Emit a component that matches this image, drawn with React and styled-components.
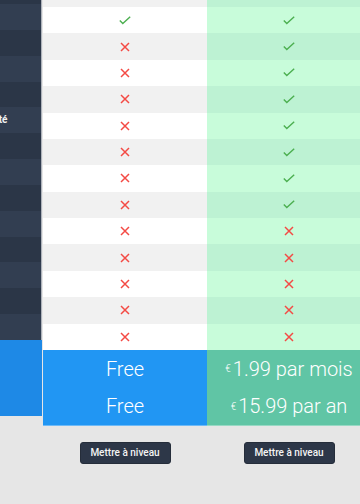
import React from "react";
import styled, { createGlobalStyle } from "styled-components";

const GlobalStyle = createGlobalStyle`
  html, body {
    margin: 0;
    padding: 0;
    background: #e6e6e6;
    overflow: hidden;
    font-family: Roboto, "Liberation Sans", sans-serif;
  }
`;

const Table = styled.div`
  display: flex;
  align-items: flex-start;
  width: 372px;
`;

const LabelColumn = styled.div`
  display: flex;
  flex-direction: column;
  width: 42px;
  flex-shrink: 0;
`;

const LabelRows = styled.div`
  display: flex;
  flex-direction: column;
  border-right: 1px solid #aeb3bb;
`;

const LabelCell = styled.div`
  height: ${p => p.$h}px;
  background: ${p => (p.$alt ? "#2b3647" : "#323e51")};
  color: #f2f2f2;
  font-size: 10px;
  font-weight: 700;
  line-height: ${p => p.$h}px;
  white-space: nowrap;
  overflow: hidden;
  text-indent: -56px;
`;

const LabelFoot = styled.div`
  height: 76px;
  background: #1e89e6;
`;

const PlanColumn = styled.div`
  display: flex;
  flex-direction: column;
  width: 164px;
  flex-shrink: 0;
  border-left: ${p => (p.$first ? "1px solid #e6e6e6" : "none")};
`;

const Cell = styled.div`
  height: ${p => p.$h}px;
  display: flex;
  align-items: center;
  justify-content: center;
  background: ${p => p.$bg};
`;

const PriceBlock = styled.div`
  display: flex;
  flex-direction: column;
  background: ${p => p.$bg};
  border-bottom: 1px solid rgba(255, 255, 255, 0.35);
`;

const PriceRow = styled.div`
  height: 37.5px;
  display: flex;
  align-items: center;
  justify-content: center;
  color: #ffffff;
  font-size: 20px;
  font-weight: 300;
`;

const Currency = styled.span`
  font-size: 10px;
  margin-right: 2px;
`;

const ButtonArea = styled.div`
  display: flex;
  justify-content: center;
  padding-top: 16px;
`;

const UpgradeButton = styled.button`
  width: 91px;
  height: 22px;
  padding: 0;
  border: 1px solid #252d3a;
  border-radius: 3px;
  background: #2d3748;
  color: #f4f4f4;
  font-family: Roboto, "Liberation Sans", sans-serif;
  font-size: 10px;
  font-weight: 500;
  cursor: pointer;
`;

const Check = () => (
  <svg width="12" height="9" viewBox="0 0 12 9" fill="none">
    <path d="M0.8 4.6 L3.8 7.6 L11.2 0.8" stroke="#4caf50" strokeWidth="1.4" />
  </svg>
);

const Cross = () => (
  <svg width="10" height="10" viewBox="0 0 10 10" fill="none">
    <path d="M1 1 L9 9 M9 1 L1 9" stroke="#f44a44" strokeWidth="1.5" />
  </svg>
);

const labels = [
  "Thèmes",
  "Widgets",
  "Export",
  "Rappels",
  "Sans publicité",
  "Notes",
  "Tags",
  "Filtres",
  "Alarmes",
  "Icônes",
  "Partage",
  "Historique",
  "Support",
];

const plans = [
  {
    key: "free",
    checks: 1,
    bg: ["#ffffff", "#f1f1f1"],
    foot: "#2196f3",
    prices: [{ text: "Free" }, { text: "Free" }],
  },
  {
    key: "premium",
    checks: 8,
    bg: ["#c8fcda", "#bdf2d3"],
    foot: "#60c5a5",
    prices: [
      { cur: "€", text: "1.99 par mois" },
      { cur: "€", text: "15.99 par an" },
    ],
  },
];

const ROW_H = 26.38;
const LABEL_H = 25.85;

export default function App() {
  return (
    <>
      <GlobalStyle />
      <Table>
        <LabelColumn>
          <LabelRows>
            <LabelCell $h={4} $alt />
            {labels.map((label, i) => (
              <LabelCell key={label} $h={LABEL_H} $alt={i % 2 === 1}>
                {label}
              </LabelCell>
            ))}
          </LabelRows>
          <LabelFoot />
        </LabelColumn>

        {plans.map((plan, pi) => (
          <PlanColumn key={plan.key} $first={pi === 0}>
            <Cell $h={7} $bg={plan.bg[1]} />
            {labels.map((label, i) => (
              <Cell key={label} $h={ROW_H} $bg={plan.bg[i % 2]}>
                {i < plan.checks ? <Check /> : <Cross />}
              </Cell>
            ))}
            <PriceBlock $bg={plan.foot}>
              {plan.prices.map((p, i) => (
                <PriceRow key={i}>
                  {p.cur && <Currency>{p.cur}</Currency>}
                  {p.text}
                </PriceRow>
              ))}
            </PriceBlock>
            <ButtonArea>
              <UpgradeButton>Mettre à niveau</UpgradeButton>
            </ButtonArea>
          </PlanColumn>
        ))}
      </Table>
    </>
  );
}
